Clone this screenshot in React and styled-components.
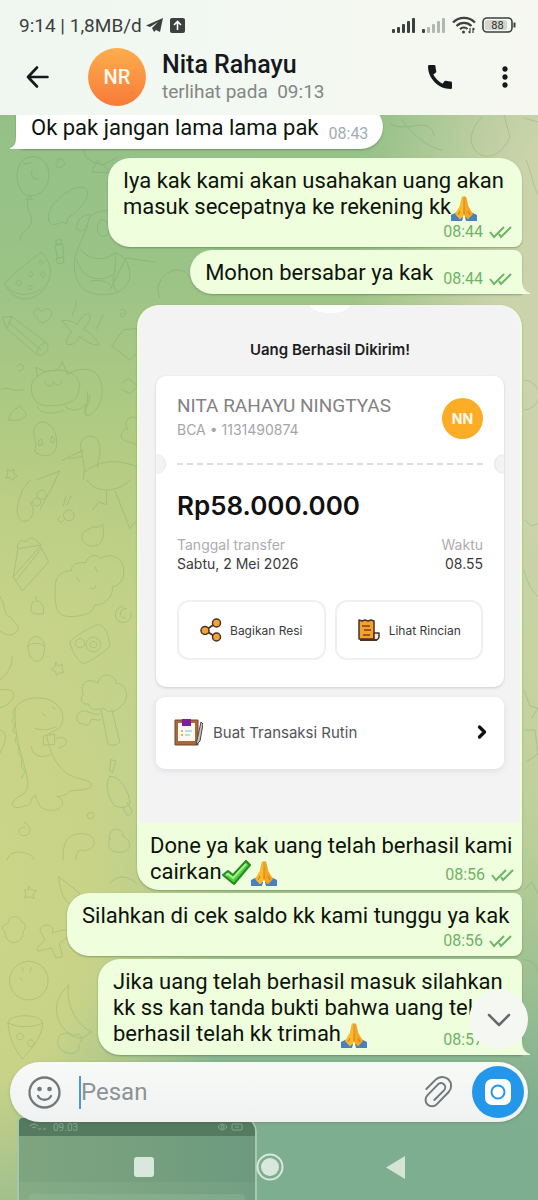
import React, { useState } from 'react';
import styled, { createGlobalStyle } from 'styled-components'
import { MdCall, MdMoreVert } from 'react-icons/md'
import { ChevronDown, ChevronRight } from 'lucide-react'

const GlobalStyle = createGlobalStyle`
  * {
    box-sizing: border-box;
  }
  body {
    margin: 0;
    font-family: Roboto, "Liberation Sans", sans-serif;
  }
  button {
    padding: 0;
    border: 0;
    background: none;
    color: inherit;
    font-family: inherit;
    cursor: pointer;
  }
  svg {
    display: block;
    flex: none;
  }
`

//---------------Layar---------------//
const Screen = styled.div`
  position: relative;
  display: flex;
  flex-direction: column;
  height: 100vh;
  overflow: hidden;
  background:
    radial-gradient(ellipse 48% 36% at -4% 74%, #cbd588 0%, #c8d388 45%, rgba(201, 212, 136, 0) 100%),
    radial-gradient(ellipse 40% 52% at 106% 28%, #cdd4ae 0%, #cad3aa 35%, rgba(205, 213, 174, 0) 100%),
    linear-gradient(180deg, #90be88 0%, #9ac387 22%, #b4cc82 38%, #c2d288 52%, #b9cf92 68%, #9dc092 82%, #7fae90 92%, #7dae90 100%);
`
const Wallpaper = styled.svg`
  position: absolute;
  left: 0;
  top: 0;
  width: 100%;
  height: 100%;
  fill: none;
  stroke: #5d8f55;
  stroke-linecap: round;
  stroke-linejoin: round;
  opacity: 0.24;
`

//---------------Header---------------//
const Header = styled.header`
  position: relative;
  z-index: 1;
  background: linear-gradient(100deg, #eff6f0 0%, #f3f8f2 45%, #f6f8f0 100%);
`
const StatusBar = styled.div`
  display: flex;
  align-items: center;
  justify-content: space-between;
  height: 44px;
  padding: 6px 22px 0 19px;
  color: #3c403e;
  font-size: 19px;
`
const StatusGroup = styled.div`
  display: flex;
  align-items: center;
  gap: ${({ $gap }) => $gap || 6}px;
`
const AppBar = styled.div`
  display: flex;
  align-items: center;
  height: 71px;
  padding: 0 17px 6px 24px;
  color: #16191b;
`
const IconButton = styled.button`
  display: grid;
  place-items: center;
  flex: none;
`
const Avatar = styled.div`
  display: grid;
  place-items: center;
  flex: none;
  width: ${({ $size }) => $size}px;
  height: ${({ $size }) => $size}px;
  border-radius: 50%;
  background: ${({ $flat }) => ($flat ? '#fbad26' : 'linear-gradient(#fdae4c, #f87a3a)')};
  color: #fffaf0;
  font-size: ${({ $flat }) => ($flat ? 14 : 20)}px;
  font-weight: ${({ $flat }) => ($flat ? 700 : 500)};
`
const Contact = styled.div`
  display: flex;
  flex: 1;
  align-items: center;
  gap: 16px;
  min-width: 0;
  margin-left: 37px;
`
const ContactName = styled.h1`
  margin: 0;
  font-size: 25px;
  line-height: 30px;
  font-weight: 500;
`
const LastSeen = styled.p`
  margin: 0;
  color: #828785;
  font-size: 19px;
  line-height: 24px;
  white-space: pre;
`
const Actions = styled.div`
  display: flex;
  align-items: center;
  gap: 33px;
`

//---------------Pesan---------------//
const Chat = styled.main`
  position: relative;
  display: flex;
  flex: 1;
  flex-direction: column;
  justify-content: flex-end;
  gap: 3px;
  min-height: 0;
  padding: 0 16px 7px;
`
const Bubble = styled.article`
  position: relative;
  flex: none;
  align-self: ${({ $incoming }) => ($incoming ? 'flex-start' : 'flex-end')};
  max-width: ${({ $max }) => $max || 424}px;
  margin-bottom: ${({ $space }) => $space || 0}px;
  border-radius: ${({ $shape }) => $shape || '22px 8px 8px 22px'};
  background: ${({ $incoming }) => ($incoming ? '#ffffff' : '#effedd')};
  box-shadow: 0 1px 2px rgba(60, 100, 60, 0.45);
`
const BubbleText = styled.p`
  display: flow-root;
  margin: 0;
  padding: ${({ $caption, $incoming }) => ($caption ? '10px 8px 5px 13px' : $incoming ? '10px 15px 5px' : '10px 10px 5px 15px')};
  color: #0c140c;
  font-size: 22px;
  line-height: 26px;
`
const Meta = styled.span`
  display: flex;
  align-items: center;
  gap: 6px;
  float: right;
  margin: ${({ $top }) => ($top === undefined ? 9 : $top)}px 0 0 10px;
  color: ${({ $incoming }) => ($incoming ? '#a3acb3' : '#6fb269')};
  font-size: 16px;
  line-height: 20px;
`
const Tail = styled.svg`
  position: absolute;
  bottom: 0;
  ${({ $left }) => ($left ? 'left: -6px; transform: scaleX(-1);' : 'right: -8px;')}
`
const Emoji = styled.svg`
  display: inline-block;
  margin: -2px 0;
  vertical-align: -5px;
`

//---------------Bukti transfer---------------//
const Receipt = styled.section`
  width: 381px;
  max-width: 100%;
  margin: 0 auto;
  padding: 0 16px 54px 17px;
  border-radius: 22px 22px 0 0;
  background: #f3f3f4;
  color: #3a3a3c;
  font-family: Inter, "Liberation Sans", sans-serif;
`
const Notch = styled.div`
  width: 40px;
  height: 8px;
  margin: 0 auto;
  border-radius: 0 0 50% 50% / 0 0 100% 100%;
  background: #ffffff;
`
const ReceiptTitle = styled.h2`
  margin: 0;
  padding: 27px 0 16px;
  color: #1d1d1f;
  font-size: 15px;
  line-height: 20px;
  font-weight: 600;
  text-align: center;
`
const Card = styled.div`
  padding: 18px 21px 27px;
  border-radius: 10px;
  background: #ffffff;
  box-shadow: 0 1px 3px rgba(0, 0, 0, 0.16);
`
const Spread = styled.div`
  display: flex;
  align-items: center;
  justify-content: space-between;
`
const Recipient = styled.div`
  color: #828284;
  font-family: Roboto, sans-serif;
  font-size: 19px;
  line-height: 24px;
`
const Account = styled.div`
  color: #a6a6a8;
  font-size: 14px;
  line-height: 24px;
`
const Perforation = styled.div`
  display: flex;
  align-items: center;
  justify-content: space-between;
  height: 20px;
  margin: 12px -21px 0;
`
const Bite = styled.span`
  width: 10px;
  height: 20px;
  border-radius: ${({ $right }) => ($right ? '10px 0 0 10px' : '0 10px 10px 0')};
  background: #f3f3f4;
  box-shadow: ${({ $right }) => ($right ? 'inset 1px 0' : 'inset -1px 0')} 1px #e6e6e8;
`
const Dashes = styled.svg`
  flex: 1;
  min-width: 0;
  height: 2px;
  margin: 0 11px;
`
const Amount = styled.div`
  padding: 15px 0 12px;
  color: #111113;
  font-size: 26px;
  line-height: 34px;
  font-weight: 600;
`
const Detail = styled.dl`
  margin: 0;
  font-size: 14px;
  line-height: 19px;
  text-align: ${({ $right }) => ($right ? 'right' : 'left')};

  dt {
    color: #adadaf;
  }
  dd {
    margin: 0;
  }
`
const ButtonRow = styled.div`
  display: grid;
  grid-template-columns: 1fr 1fr;
  gap: 9px;
  margin-top: 27px;
`
const ReceiptButton = styled.button`
  display: flex;
  align-items: center;
  justify-content: center;
  gap: 8px;
  height: 60px;
  border: 2px solid #f0f0f1;
  border-radius: 12px;
  font-size: 12px;
`
const RoutineButton = styled.button`
  display: flex;
  align-items: center;
  gap: 10px;
  width: 100%;
  height: 72px;
  margin-top: 10px;
  padding: 0 12px 2px 17px;
  border-radius: 9px;
  background: #ffffff;
  box-shadow: 0 2px 6px rgba(50, 60, 90, 0.1);
  color: #555557;
  font-size: 15px;

  span {
    flex: 1;
    text-align: left;
  }
`

//---------------Kolom pesan---------------//
const ScrollButton = styled.button`
  position: absolute;
  right: 10px;
  bottom: 13px;
  display: grid;
  place-items: center;
  width: 59px;
  height: 59px;
  border-radius: 50%;
  background: #f5f7f3;
  color: #666a6a;
`
const Composer = styled.form`
  position: relative;
  z-index: 1;
  display: flex;
  align-items: center;
  flex: none;
  height: 60px;
  margin: 0 10px;
  padding: 0 4px 0 18px;
  border-radius: 30px;
  background: linear-gradient(#f8faf8, #f0f2f2);
  box-shadow: 0 1px 3px rgba(50, 80, 60, 0.25);
  color: #74787a;
`
const Caret = styled.span`
  width: 2px;
  height: 33px;
  margin-left: 18px;
  background: #4a98d6;
`
const MessageInput = styled.input`
  flex: 1;
  min-width: 0;
  padding: 0;
  border: 0;
  outline: 0;
  background: transparent;
  color: #0c140c;
  font-family: inherit;
  font-size: 24px;

  &::placeholder {
    color: #8e9294;
    opacity: 1;
  }
`
const CameraButton = styled(IconButton)`
  width: 52px;
  height: 52px;
  margin-left: 19px;
  border-radius: 50%;
  background: #2397ea;
`

//---------------Navigasi---------------//
const Footer = styled.footer`
  position: relative;
  display: grid;
  flex: none;
  height: 78px;
`
const Preview = styled.div`
  grid-area: 1 / 1;
  width: 240px;
  height: 84px;
  margin: -6px 0 0 17px;
  overflow: hidden;
  border: 2px solid rgba(178, 210, 180, 0.8);
  border-bottom: 0;
  border-radius: 6px 16px 0 0;
  background: linear-gradient(90deg, #86ab84, #729f84);
`
const PreviewStatus = styled.div`
  display: flex;
  align-items: center;
  justify-content: space-between;
  height: 18px;
  padding: 0 12px 0 10px;
  background: #547a60;
  color: #87a88b;
  font-size: 10px;
`
const PreviewBar = styled.div`
  height: 46px;
  background: rgba(70, 120, 90, 0.12);
`
const PreviewPanel = styled.div`
  height: 30px;
  margin: 12px 10px 0;
  border-radius: 4px;
  background: rgba(160, 200, 165, 0.25);
`
const Navigation = styled.nav`
  grid-area: 1 / 1;
  display: flex;
  align-items: center;
  justify-content: center;
  gap: 102px;
  padding-top: 12px;
`

//---------------Ikon---------------//
function Hands() {
  return (
    <Emoji width='26' height='26' viewBox='0 0 26 26' aria-hidden='true'>
      <path d='M0 20l6-3 6 5-1 4H0z' fill='#4a7fc0' />
      <path d='M26 20l-6-3-6 5 1 4h11z' fill='#4a7fc0' />
      <path d='M12.600 1c-1.200 0-1.900.8-2.200 2.300L8.700 11 4 19l5 5.500 4-4.500z' fill='#fbb92c' />
      <path d='M13.400 1c1.200 0 1.900.8 2.200 2.300l1.700 7.700 4.700 8-5 5.500-4-4.500z' fill='#f5a623' />
      <path d='M13 2v17M9 16l-2 4M17 16l2 4' stroke='#c67d12' fill='none' />
    </Emoji>
  )
}

function GreenCheck() {
  return (
    <Emoji width='29' height='26' viewBox='0 0 29 26' aria-hidden='true'>
      <path d='M1 15l5-4 5 4L24 1l4 4-16 19z' fill='#4fd13c' stroke='#258a24' strokeWidth='2' strokeLinejoin='round' />
      <path d='M4 15l2-1 5 4L24 4' stroke='#a6f08e' strokeWidth='2' fill='none' />
    </Emoji>
  )
}

function DoubleCheck() {
  return (
    <svg width='23' height='14' viewBox='0 0 23 14' fill='none' stroke='#6db466' strokeWidth='2'>
      <path d='M1 7l4 5L15 2M10 9l2 3L22 2' />
    </svg>
  )
}

function Signal({ weak }) {
  return (
    <svg width='24' height='16' viewBox='0 0 24 16' fill='#3c403e'>
      <rect y='12' width='3' height='4' rx='1' />
      <g opacity={weak ? 0.35 : 1}>
        <rect x='5' y='10' width='3' height='6' rx='1' />
        <rect x='10' y='7' width='3' height='9' rx='1' />
        <rect x='15' y='4' width='3' height='12' rx='1' />
        <rect x='20' y='1' width='3' height='15' rx='1' />
      </g>
    </svg>
  )
}

function Wifi() {
  return (
    <svg width='24' height='18' viewBox='0 0 24 18' fill='none' stroke='#3c403e' strokeWidth='2.200'>
      <path d='M1 6.500a15.500 15.500 0 0 1 22 0M4.500 10a10.500 10.500 0 0 1 15 0M8 13.300a5.600 5.600 0 0 1 7.500-.3' />
      <circle cx='11.500' cy='16' r='1.500' fill='#3c403e' stroke='none' />
      <path d='M18 12v5M21 12v5M16.500 15.500l1.500 1.500M22.500 13.500L21 12' strokeWidth='1.200' />
    </svg>
  )
}

function Battery() {
  return (
    <svg width='34' height='16' viewBox='0 0 34 16'>
      <rect x='1' y='1' width='29' height='14' rx='4' fill='none' stroke='#3c403e' strokeWidth='1.600' />
      <rect x='3' y='3' width='22' height='10' rx='2' fill='#d3d6d1' />
      <path d='M32.500 5.500v5' stroke='#3c403e' strokeWidth='2' />
      <text x='15.500' y='12' fontSize='11' textAnchor='middle' fill='#2c302e'>88</text>
    </svg>
  )
}

function ShareIcon() {
  return (
    <svg width='22' height='24' viewBox='0 0 22 24' stroke='#4a3226' strokeWidth='1.500'>
      <path d='M6 12l10-7M6 13l10 6' strokeWidth='2' />
      <circle cx='5' cy='12.500' r='4' fill='#f2a33a' />
      <circle cx='16.500' cy='5' r='4' fill='#f2a33a' />
      <circle cx='16.500' cy='19' r='4' fill='#f2a33a' />
    </svg>
  )
}

function BillIcon() {
  return (
    <svg width='24' height='24' viewBox='0 0 24 24' stroke='#4a3226' strokeWidth='1.500' strokeLinejoin='round'>
      <path d='M2 2l3 1 3-1 3 1 3-1 3 1v18H2z' fill='#f2a32c' />
      <path d='M17 15h5v4a3 3 0 0 1-5 2z' fill='#f6ead8' />
      <path d='M5 8h8M7 12h7M6 17h7' stroke='#8a3d17' />
      <path d='M3 22h17' strokeWidth='2' />
    </svg>
  )
}

function ClipboardIcon() {
  return (
    <svg width='30' height='28' viewBox='0 0 30 28'>
      <path d='M2 2h23v25H2z' fill='#a8683d' stroke='#70462f' />
      <path d='M5 5h17v18H5z' fill='#fdf8ee' />
      <path d='M9 1h9v7H9z' fill='#7b1e9c' />
      <path d='M8 13h2M8 17h2' stroke='#f3b24e' strokeWidth='2' />
      <path d='M12 13h7M12 17h5' stroke='#9ed6dc' strokeWidth='1.500' />
      <path d='M28 4l-4 18-1 5 4-4 3-17z' fill='#c9c1bd' stroke='#4d4342' />
    </svg>
  )
}

function Doodles() {
  return (
    <Wallpaper viewBox='0 0 538 1200' preserveAspectRatio='xMidYMin slice' aria-hidden='true'>
      <g transform='translate(0 120) scale(0.333)' strokeWidth='3'>
        <path d='M98 110c-34 0-47 30-47 58 0 34 20 60 38 60 34 0 58-28 58-62 0-32-20-56-49-56zM88 228l-10 10h18zM85 240c-14 30 30 55-4 88-24 16-20 30-18 34M96 152c-4 20 4 26 20 26M70 132l25-4' />
        <path d='M170 120c20-14 34 16 12 22-18 4-18-20-4-18M250 90c6 30 30 40 60 44l40-20M275 155l18-34 40 36z' />
        <path d='M146 300c-8-40 50-90 90-98 30-4 34 20 20 40-20 30-34 40-52 52l-4 18-14-6c-20 10-34 14-40-6z' />
        <path d='M270 290c30-26 80-24 110 4M270 284c-24-4-44 26-40 44 14 10 24 2 30-8zM262 320c-14 40-44 80-38 130 10 60 40 74 90 74 50 0 76-30 76-60-2-40-24-60-46-66M240 386c30 40 80 36 104 14M230 420c20 60 70 70 110 44M310 300c-24 0-24 50 0 50s22-50 0-50M270 484c30-6 60 0 66 20M345 405c10 50-20 80 6 110' />
        <path d='M14 494c-8-6 84-80 110-96 30 30 36 60 16 96-30 56-96 60-126 0zM22 500c20 28 66 32 100 8M56 480l-8 10 8 10 8-10zM92 456l-7 8 8 8 6-8zM122 422l-6 6 8 6 6-6zM128 456l-8 8 10 8 6-8zM90 496l-6 8 6 8 7-8z' />
        <path d='M168 362l14-4 4 12-14 6zM166 376l22-4 4 38-18 6zM170 416l20-4 2 16-18 4zM127 610c-24-20-34-34-18-42 8-4 14 4 16 8 8-14 30-12 30 4-2 18-14 22-28 30z' />
        <path d='M8 592l28-2 104 80c14 20-10 44-30 34L20 626zM36 590L20 626M30 610l92 80M112 704c-4-20 10-34 28-34' />
        <path d='M188 604c10-8 30 2 44 10 20-40 40-40 38-20 0 12-12 24-20 34 20 10 40 30 48 48-30 0-50-20-60-26-10 22-20 26-36 24-8-14 6-28 14-38-10-10-20-20-28-32zM228 544c4 20-8 24-10 42M310 586l-20 40M360 570c24-10 22 26 4 20-8-6 0-14 6-10' />
        <path d='M112 770l-4-28 28 14c10-4 24-4 34-2l18-28 14 38c30-20 86-28 100 20 16 48-10 96-40 104-20-6 8-30 8-60M94 800c4-60 144-70 144-2 0 60-60 60-96 60-28 0-50-20-48-58zM134 786c10 20 24 16 26 0 10 16 24 12 26-4M112 860c10 30 60 20 78 12M196 860c20 20 50 10 60-6M262 886c-20-20 10-36 0-70' />
        <path d='M0 810c20-14 30 8 70 0M26 900c6-30 24-30 34-42 10 16 20 20 18 28-12 18-36 18-52 14zM50 740c16-20 34 10 8 12M335 680l36-50 40-4M335 680c20 10 40 30 54 42l20-20M366 790l20-14 24 20M366 810l26 12 18-20M410 894c-30-10-40 20-26 34-24 0-30 34 0 38l26 8' />
        <path d='M126 906c-40 10-20 50-18 70 0 16-10 20 4 26 30 14 60 4 58-34 0-40-20-60-44-62zM116 964l10-6 2 16-10 4zM156 950l8 6-2 14-8-2zM250 1080c14-60-20-94-4-116 20-30 54-10 54 20 2 30-10 40-6 60M186 1022l64-30M206 1018l40-8M250 1060c60-50 120-34 160-20M22 1050l10 4 10-6v14l10 6-10 6-4 8-10-8-10 2 4-12zM110 1080l70-26-16 30' />
      </g>
      <g transform='translate(0 480) scale(0.333)' strokeWidth='3'>
        <path d='M60 50c-10 30-14 60 6 74 30 4 44-30 24-60M62 48c6-30 16-30 30-48M120 88l48-88M125 30a14 14 0 1 0 1 0M110 54a12 12 0 1 0 1 0M180 110c-16 10 4 24 12 10M206 90a16 16 0 1 0 1 0M190 78l8-28M200 76l14-28' />
        <path d='M262 0c20 40 90 40 130 0M320 34v40l-24-8-18 24M346 34l44 112 16-20M280 140c20 10 34-20 28 0 6 24 0 50-16 56-30 10-50-14-46-30 6-16 20-16 34-26z' />
        <path d='M40 290l14-84 66-10 26 50-78 86zM40 290l80-90M50 300l74-94M54 206c-8-20 14-30 24-20 10-20 34-10 36 4 12-4 8 10 6 8' />
        <path d='M214 272c-30 0-50 20-48 50-4 70 10 88 44 88 30 0 70-6 74-34 30 0 56-24 54-56 40 0 50-80 0-92-14-2-26 0-36 8-14-16-40-10-44 12-22 0-44 0-44 24zM230 292l10 14M286 262l6 14M270 324c10 6 20 2 16-6' />
        <path d='M100 364c-12 20-8 38 6 38h24c4-20-6-40-20-38l-4-14M370 380a24 24 0 1 0 24 20M380 386c-24-2-26 30-4 28M210 486c2-10 66-46 86-54 30 14 30 50 34 66-10 14-60 50-80 54-20-14-36-40-40-66zM240 476a14 14 0 1 0 1 0M280 472a22 22 0 1 0 1 0M280 484a10 10 0 1 0 1 0M84 500c0-40 48-40 50 0 0 60-46 60-50 0zM84 500c10-16 40-10 50 0' />
        <path d='M168 548l6 10 14-4-2 14 6 10-14 2-8 6-4-12-12-4 10-8zM0 350c20 30 10 60 30 60 14 20 30 30 24 40-14 20-30 20-54 4M36 530c4 30-20 60-36 70M0 630c60-10 50 40 0 54M0 750c24 10 20 30 0 70' />
        <path d='M250 644c-14-40 20-50 44-34 4-34 54-30 54 0 34 0 44 50 14 70-14 20-40 20-50 4-20 10-46 6-46-12-20 6-30-14-16-28zM304 692l20 100c8 8 30 4 36-4l-24-98M300 702c-20 10-44-20-60-4-20 10-4 40 10 34 10 10 24 0 22-12 10-4 20 4 30 0' />
        <path d='M46 684c20-30 60-34 96-26 60 20 54 80 28 92-12 4-20 10-30 16 10 60 40 110 78 124 20 8 60 12 56 28-4 16-50 12-64 16-20 20-40 16-40 16 30 10 20 40-10 42-40 2-44-20-54-46-20 14-6 30-30 32-50 20-50-16-8-34 30-20 10-60-4-120-12-40-22-90-18-140zM104 746c24 8 46 4 66-6M128 700l8 10M158 682l8 6M94 800c4 36 40 34 58 24M130 770v26l34-2v-30zM170 776c30-14 44 20 8 28' />
        <path d='M46 684l-8 14 6 8-8 18 8 10-6 20 12 10-4 24 10 10v24l10 14-2 24 12 16-12 20' />
        <path d='M330 890c40 0 60 60 60 80-10 20-40 14-50 4-20-30-24-70-10-84zM368 984l14 22c14 0 16-10 12-16l-12-20M334 840l14 4-10 34-8-4zM72 1026c30 20 20 44-4 42-20-6-10-30 6-24M262 1008a10 10 0 1 0 20 0 10 10 0 1 0-20 0M190 1140c-4-60 20-80 60-78 40 4 44 40 10 50-20 6-20-20-34 28M330 1080c-10-40 40-40 40-10 30 14 24 50-14 48-40-4-30-30-26-38zM22 1140c10-40 80-20 80 0' />
      </g>
      <g transform='translate(0 860) scale(0.333)' strokeWidth='3'>
        <path d='M176 50l64 50-30 32c-20-10-30-40-34-82zM86 80l8 10 16 2-10 10 2 14-14-6-14 4 4-14-6-10h12zM14 216c-20-20 4-20 10-26 4-30 40-20 40-6 20 10 10 24 6 30 0 40-50 50-56 2zM120 210c10-30 50-10 36 10 30-10 60-20 50 10l-28 20 10 40-20 4-14-30-40 10c-10-10 10-20 20-34zM330 70c24-30 60-20 80 0' />
        <path d='M86 304a58 58 0 1 0 1 0M66 322l4 12M94 324l-4 12M60 354l8 8M24 490c0-30 100-30 104 0 0 50-50 90-60 108-24-30-40-60-44-108zM26 490c20 14 80 14 100 0M60 520a10 10 0 1 0 1 0M92 540a10 10 0 1 0 1 0M206 376c-70 60-30 150 40 160l30-20c-50-20-80-90-70-140zM176 560c-14-40 30-50 40-30 24-20 40 10 20 24 10 30-40 40-60 6z' />
      </g>
      <path d='M390 124c20 10 40-10 44 12M402 120c14 20 34 30 40 30M482 117c-30 30 10 60 28 20l-6-22M524 118l14 4M526 160c8 20 8 30 12 34M524 380a12 12 0 1 1 0 30M525 520l6 6 7-2M524 570c4 16 10 24 14 26M524 690l6 16 8 2-6 10M525 730h10l3 24-12 8M524 890l8-8 6 12M524 960c10 0 14 8 14 12M110 290l16-32 30 4M160 298c-10-20 20-40 30-20' />
    </Wallpaper>
  )
}

//---------------Bagian pesan---------------//
function OutTail() {
  return (
    <Tail width='14' height='16' viewBox='0 0 14 16'>
      <path d='M0 0h6c0 9 2 13 8 15v1H0z' fill='#effedd' />
    </Tail>
  )
}

function Sent({ time, top }) {
  return (
    <Meta $top={top}>
      <time>{time}</time>
      <DoubleCheck />
    </Meta>
  )
}

function TransferReceipt() {
  return (
    <Receipt>
      <Notch />
      <ReceiptTitle>Uang Berhasil Dikirim!</ReceiptTitle>
      <Card>
        <Spread>
          <div>
            <Recipient>NITA RAHAYU NINGTYAS</Recipient>
            <Account>BCA • 1131490874</Account>
          </div>
          <Avatar $size={41} $flat>NN</Avatar>
        </Spread>
        <Perforation>
          <Bite />
          <Dashes>
            <line x1='0' y1='1' x2='100%' y2='1' stroke='#dededf' strokeWidth='2' strokeDasharray='6 4' />
          </Dashes>
          <Bite $right />
        </Perforation>
        <Amount>Rp58.000.000</Amount>
        <Spread>
          <Detail>
            <dt>Tanggal transfer</dt>
            <dd>Sabtu, 2 Mei 2026</dd>
          </Detail>
          <Detail $right>
            <dt>Waktu</dt>
            <dd>08.55</dd>
          </Detail>
        </Spread>
        <ButtonRow>
          <ReceiptButton type='button'><ShareIcon />Bagikan Resi</ReceiptButton>
          <ReceiptButton type='button'><BillIcon />Lihat Rincian</ReceiptButton>
        </ButtonRow>
      </Card>
      <RoutineButton type='button'>
        <ClipboardIcon />
        <span>Buat Transaksi Rutin</span>
        <ChevronRight size={20} strokeWidth={4} color='#111113' />
      </RoutineButton>
    </Receipt>
  )
}

function ChatHeader() {
  return (
    <Header>
      <StatusBar>
        <StatusGroup $gap={4}>
          <span>9:14 | 1,8MB/d</span>
          <svg width='20' height='16' viewBox='0 0 20 16' fill='#3c403e'>
            <path d='M0 8.500L17 1l-3 14-4-2-2 2-2-4 6-6-8 5z' />
          </svg>
          <svg width='15' height='15' viewBox='0 0 15 15'>
            <rect width='15' height='15' rx='2' fill='#3c403e' />
            <path d='M7.500 12V4M4 7l3.500-3.500L11 7' stroke='#fff' strokeWidth='1.600' fill='none' />
          </svg>
        </StatusGroup>
        <StatusGroup>
          <Signal />
          <Signal weak />
          <Wifi />
          <Battery />
        </StatusGroup>
      </StatusBar>
      <AppBar>
        <IconButton type='button' aria-label='Kembali'>
          <svg width='27' height='24' viewBox='0 0 27 24' fill='none' stroke='currentColor' strokeWidth='2.600' strokeLinecap='round' strokeLinejoin='round'>
            <path d='M23.500 12H4M13 2.500L4 12l9 9.500' />
          </svg>
        </IconButton>
        <Contact>
          <Avatar $size={58}>NR</Avatar>
          <div>
            <ContactName>Nita Rahayu</ContactName>
            <LastSeen>terlihat pada  09:13</LastSeen>
          </div>
        </Contact>
        <Actions>
          <IconButton type='button' aria-label='Telepon'><MdCall size={32} /></IconButton>
          <IconButton type='button' aria-label='Menu'><MdMoreVert size={32} /></IconButton>
        </Actions>
      </AppBar>
    </Header>
  )
}

//---------------App---------------//
function App() {
  const [message, setMessage] = useState('')

  return (
    <>
    <GlobalStyle />
    <Screen>
      <Doodles />
      <ChatHeader />
      <Chat>
        <Bubble $incoming $space={6} $shape='8px 22px 22px 8px'>
          <Tail $left width='14' height='16' viewBox='0 0 14 16'>
            <path d='M0 0h8c0 9 0 13 6 15v1H0z' fill='#ffffff' />
          </Tail>
          <BubbleText $incoming>
            Ok pak jangan lama lama pak
            <Meta $incoming>08:43</Meta>
          </BubbleText>
        </Bubble>
        <Bubble $max={414} $shape='22px 22px 8px 22px'>
          <BubbleText>
            Iya kak kami akan usahakan uang akan masuk secepatnya ke rekening kk<Hands />
            <Sent time='08:44' top={2} />
          </BubbleText>
        </Bubble>
        <Bubble $space={8} $shape='22px 8px 0 22px'>
          <OutTail />
          <BubbleText>
            Mohon bersabar ya kak
            <Sent time='08:44' />
          </BubbleText>
        </Bubble>
        <Bubble $max={385} $shape='22px 22px 8px 22px'>
          <TransferReceipt />
          <BubbleText $caption>
            Done ya kak uang telah berhasil kami cairkan<GreenCheck /><Hands />
            <Sent time='08:56' top={6} />
          </BubbleText>
        </Bubble>
        <Bubble $max={455}>
          <BubbleText>
            Silahkan di cek saldo kk kami tunggu ya kak
            <Sent time='08:56' top={2} />
          </BubbleText>
        </Bubble>
        <Bubble $shape='22px 8px 0 22px'>
          <OutTail />
          <BubbleText>
            Jika uang telah berhasil masuk silahkan kk ss kan tanda bukti bahwa uang telah berhasil telah kk trimah<Hands />
            <Sent time='08:57' />
          </BubbleText>
        </Bubble>
        <ScrollButton type='button' aria-label='Ke bawah'>
          <ChevronDown size={40} strokeWidth={1.500} />
        </ScrollButton>
      </Chat>
      <Composer onSubmit={(e) => e.preventDefault()}>
        <IconButton type='button' aria-label='Emoji'>
          <svg width='33' height='33' viewBox='0 0 33 33' fill='none' stroke='currentColor' strokeWidth='2.300' strokeLinecap='round'>
            <circle cx='16.500' cy='16.500' r='15' />
            <path d='M10 20c3 5 10 5 13 0' />
            <circle cx='11.500' cy='13' r='1.200' fill='currentColor' />
            <circle cx='21.500' cy='13' r='1.200' fill='currentColor' />
          </svg>
        </IconButton>
        <Caret />
        <MessageInput
          aria-label='Pesan'
          placeholder='Pesan'
          value={message}
          onChange={(e) => setMessage(e.target.value)}
        />
        <IconButton type='button' aria-label='Lampirkan'>
          <svg width='30' height='35' viewBox='465 585 90 105' fill='none' stroke='currentColor' strokeWidth='6' strokeLinecap='round'>
            <path d='M475 627L503 599A26 26 0 0 1 542 636L506 673A19 19 0 0 1 478 646L510 613A12 12 0 0 1 528 631L499 660' />
          </svg>
        </IconButton>
        <CameraButton type='button' aria-label='Kamera'>
          <svg width='26' height='26' viewBox='0 0 26 26'>
            <rect width='26' height='26' rx='7' fill='#fff' />
            <circle cx='13' cy='13' r='6.500' fill='none' stroke='#2397ea' strokeWidth='2' />
          </svg>
        </CameraButton>
      </Composer>
      <Footer>
        <Preview>
          <PreviewStatus>
            <StatusGroup>
              <svg width='18' height='8' viewBox='0 0 18 8' fill='none' stroke='currentColor'><path d='M1 3q4-4 8 0M3 5q2-2 4 0M9 6h3M14 6h3' /></svg>
              <span>09.03</span>
            </StatusGroup>
            <svg width='25' height='8' viewBox='0 0 25 8' fill='none' stroke='currentColor'><path d='M0 4q4-6 9 0-5 6-9 0z' /><circle cx='4.500' cy='4' r='1.500' /><rect x='14' y='1' width='10' height='6' rx='1' /><path d='M17 4h4' /></svg>
          </PreviewStatus>
          <PreviewBar />
          <PreviewPanel />
        </Preview>
        <Navigation>
          <IconButton type='button' aria-label='Aplikasi terbaru'>
            <svg width='20' height='20' viewBox='0 0 20 20'><rect width='20' height='20' rx='3' fill='#d9e8dc' /></svg>
          </IconButton>
          <IconButton type='button' aria-label='Beranda'>
            <svg width='28' height='28' viewBox='0 0 28 28'><circle cx='14' cy='14' r='12.500' fill='none' stroke='#d9e8dc' strokeWidth='2' /><circle cx='14' cy='14' r='9' fill='#d9e8dc' /></svg>
          </IconButton>
          <IconButton type='button' aria-label='Sebelumnya'>
            <svg width='19' height='23' viewBox='0 0 19 23'><path d='M19 0v23L0 11.500z' fill='#d4e4d6' /></svg>
          </IconButton>
        </Navigation>
      </Footer>
    </Screen>
    </>
  )
}

export default App
